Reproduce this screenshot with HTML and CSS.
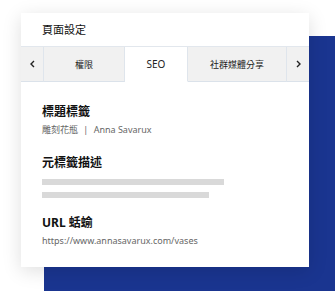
FILE: index.html
```html
<!doctype html>
<html lang="zh-Hant">
  <head>
    <meta charset="utf-8" />
    <title>頁面設定</title>
    <link rel="stylesheet" href="styles.css">
  </head>

  <body>
    <div class="stage">
      <div class="backdrop"></div>

      <div class="panel">
        <div class="panel-title">頁面設定</div>

        <div class="tabs">
          <div class="tab arrow">
            <svg width="5" height="8" viewBox="0 0 5 8"><path d="M4 1 L1 4 L4 7" fill="none" stroke="#222" stroke-width="1.4"/></svg>
          </div>
          <div class="tab perm">權限</div>
          <div class="tab seo active">SEO</div>
          <div class="tab social">社群媒體分享</div>
          <div class="tab arrow">
            <svg width="5" height="8" viewBox="0 0 5 8"><path d="M1 1 L4 4 L1 7" fill="none" stroke="#222" stroke-width="1.4"/></svg>
          </div>
        </div>

        <div class="panel-body">
          <h2 class="field-title">標題標籤</h2>
          <div class="field-value">雕刻花瓶 <span class="sep">|</span> Anna Savarux</div>

          <h2 class="field-title gap">元標籤描述</h2>
          <div class="skeleton long"></div>
          <div class="skeleton short"></div>

          <h2 class="field-title gap">URL 蛞蝓</h2>
          <div class="field-value">https://www.annasavarux.com/vases</div>
        </div>
      </div>
    </div>
  </body>
</html>
```

FILE: styles.css
```css
body {
  margin: 0;
  background-color: #ffffff;
  font-family: 'Noto Sans', 'Noto Sans CJK TC', sans-serif;
  color: #111;
}

.stage {
  position: relative;
  width: 335px;
  height: 295px;
  padding: 13px 0 0 21px;
  box-sizing: border-box;
}

/* blue block sitting behind the card */
.backdrop {
  position: absolute;
  left: 44px;
  top: 36px;
  right: 0;
  height: 255px;
  background-color: #1a3590;
}

.panel {
  position: relative;
  width: 288px;
  height: 254px;
  background-color: #fff;
  box-shadow: 0 4px 18px rgba(0, 0, 0, 0.13);
}

.panel-title {
  height: 33px;
  padding-left: 21px;
  font-size: 11px;
  line-height: 34px;
  border-bottom: 1px solid #e2e7ed;
}

.tabs {
  display: flex;
  height: 35px;
}

.tab {
  display: flex;
  align-items: center;
  justify-content: center;
  box-sizing: border-box;
  background-color: #f1f1f1;
  border-right: 1px solid #dfe5ec;
  border-bottom: 1px solid #dbe2ea;
  font-size: 9px;
  color: #222;
}

.tab.arrow {
  width: 23px;
}

.tab.arrow:last-child {
  width: 22px;
  border-right: none;
}

.tab.perm {
  width: 81px;
}

.tab.seo {
  width: 63px;
}

.tab.social {
  width: 99px;
}

.tab.active {
  background-color: #fff;
  border-bottom-color: #fff;
  font-size: 10px;
}

.panel-body {
  padding: 20px 21px 0;
}

.field-title {
  margin: 0;
  font-size: 12px;
  font-weight: 700;
  line-height: 20px;
}

.field-title.gap {
  margin-top: 15px;
}

.field-value {
  font-size: 9px;
  line-height: 16px;
  color: #666;
}

.field-value .sep {
  margin: 0 3px;
}

.skeleton {
  height: 6px;
  background-color: #d9d9d9;
}

.skeleton.long {
  width: 182px;
  margin-top: 6px;
}

.skeleton.short {
  width: 167px;
  margin-top: 7px;
}
```
